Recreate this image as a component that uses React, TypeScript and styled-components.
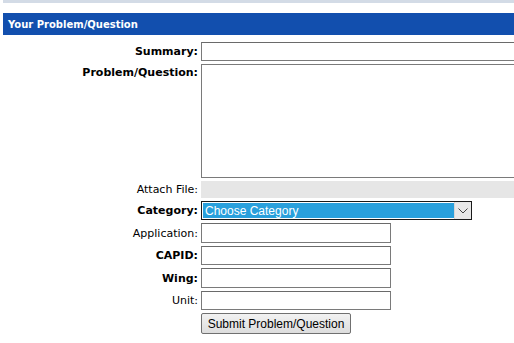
import React from "react";
import styled, { createGlobalStyle } from "styled-components";

const Global = createGlobalStyle`
  html, body { margin: 0; padding: 0; background: #fff; }
  body { font-family: "DejaVu Sans", Verdana, sans-serif; overflow: hidden; }
`;

const Page = styled.div`
  width: 514px;
  height: 343px;
  padding-left: 3px;
  box-sizing: border-box;
  overflow: hidden;
`;

const TopStrip = styled.div`
  height: 3px;
  background: #d3dbe6;
  margin-bottom: 10px;
`;

const Header = styled.div`
  height: 22px;
  background: #124fae;
  color: #fff;
  font-family: "DejaVu Sans", Verdana, sans-serif;
  font-weight: bold;
  font-size: 10px;
  display: flex;
  align-items: center;
  padding-left: 5px;
  margin-bottom: 7px;
`;

const Form = styled.div`
  display: grid;
  grid-template-columns: 195px 1fr;
  column-gap: 3px;
  row-gap: 3px;
`;

const Label = styled.label<{ $bold?: boolean; $top?: boolean }>`
  display: flex;
  justify-content: flex-end;
  align-items: ${(p) => (p.$top ? "flex-start" : "center")};
  padding-top: ${(p) => (p.$top ? "2px" : "0")};
  font-family: "DejaVu Sans", Verdana, sans-serif;
  font-weight: ${(p) => (p.$bold ? "bold" : "normal")};
  font-size: 11px;
  color: #000;
  white-space: nowrap;
`;

const TextInput = styled.div<{ $w?: string; $h: number }>`
  box-sizing: border-box;
  width: ${(p) => p.$w ?? "330px"};
  height: ${(p) => p.$h}px;
  border: 1px solid #7a7a7a;
  border-top-color: #6a6a6a;
  background: #fff;
`;

const TextArea = styled.div`
  box-sizing: border-box;
  width: 330px;
  height: 114px;
  border: 1px solid #7a7a7a;
  background: #fff;
`;

const FileBox = styled.div`
  height: 17px;
  width: 330px;
  background: #e6e6e6;
`;

const Select = styled.div`
  box-sizing: border-box;
  width: 271px;
  height: 19px;
  border: 1px solid #1a1a1a;
  display: flex;
  background: #fff;
`;

const SelectValue = styled.div`
  flex: 1;
  background: #29a0dc;
  color: #fff;
  font-family: "Liberation Sans", Arial, sans-serif;
  font-size: 12px;
  display: flex;
  align-items: center;
  padding-left: 2px;
  margin: 1px 0 1px 1px;
`;

const SelectArrow = styled.div`
  width: 16px;
  background: #e8e8e8;
  border-left: 1px solid #d6d6d6;
  display: flex;
  align-items: center;
  justify-content: center;
`;

const Button = styled.button`
  justify-self: start;
  box-sizing: border-box;
  width: 150px;
  height: 21px;
  padding: 0;
  border: 1px solid #707070;
  border-radius: 2px;
  background: linear-gradient(#f2f2f2, #dddddd);
  font-family: "Liberation Sans", Arial, sans-serif;
  font-size: 12px;
  color: #000;
`;

const Empty = styled.div``;

export default function App() {
  return (
    <>
      <Global />
      <Page>
        <TopStrip />
        <Header>Your Problem/Question</Header>
        <Form>
          <Label $bold>Summary:</Label>
          <TextInput $h={19} $w="330px" />
          <Label $bold $top>Problem/Question:</Label>
          <TextArea />
          <Label>Attach File:</Label>
          <FileBox />
          <Label $bold>Category:</Label>
          <Select>
            <SelectValue>Choose Category</SelectValue>
            <SelectArrow>
              <svg width="10" height="6" viewBox="0 0 10 6">
                <path d="M0.5 0.5 L5 5 L9.5 0.5" fill="none" stroke="#444" strokeWidth="1" />
              </svg>
            </SelectArrow>
          </Select>
          <Label>Application:</Label>
          <TextInput $h={20} $w="190px" />
          <Label $bold>CAPID:</Label>
          <TextInput $h={19} $w="190px" />
          <Label $bold>Wing:</Label>
          <TextInput $h={20} $w="190px" />
          <Label>Unit:</Label>
          <TextInput $h={19} $w="190px" />
          <Empty />
          <Button>Submit Problem/Question</Button>
        </Form>
      </Page>
    </>
  );
}
